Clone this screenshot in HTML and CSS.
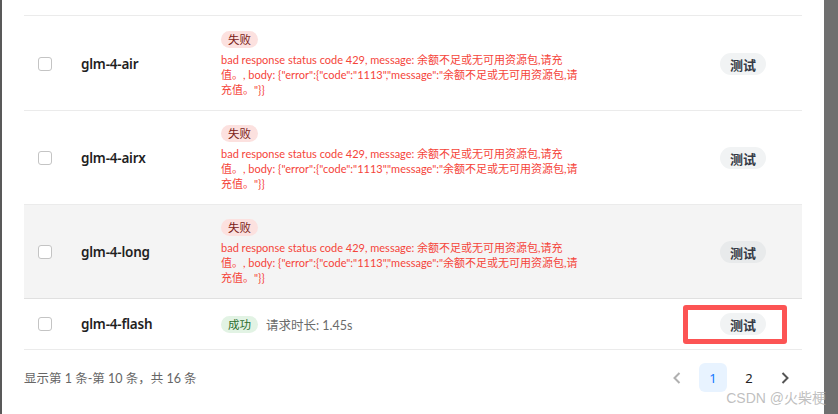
FILE: index.html
```html
<!DOCTYPE html>
<html lang="zh-CN">
<head>
<meta charset="utf-8">
<title>模型测试</title>
<link rel="stylesheet" href="styles.css">
</head>
<body>
<div class="frame">
  <div class="edge-left"></div>
  <main class="main">
    <div class="table">
      <div class="row-cut"></div>

      <div class="row row-first">
        <div class="cell-check"><span class="checkbox"></span></div>
        <div class="cell-name">glm-4-air</div>
        <div class="cell-status">
          <span class="tag tag-fail">失败</span>
          <div class="err">bad response status code 429, message: 余额不足或无可用资源包,请充<br>值。, body: {"error":{"code":"1113","message":"余额不足或无可用资源包,请<br>充值。"}}</div>
        </div>
        <div class="cell-action"><button class="btn-test">测试</button></div>
      </div>

      <div class="row">
        <div class="cell-check"><span class="checkbox"></span></div>
        <div class="cell-name">glm-4-airx</div>
        <div class="cell-status">
          <span class="tag tag-fail">失败</span>
          <div class="err">bad response status code 429, message: 余额不足或无可用资源包,请充<br>值。, body: {"error":{"code":"1113","message":"余额不足或无可用资源包,请<br>充值。"}}</div>
        </div>
        <div class="cell-action"><button class="btn-test">测试</button></div>
      </div>

      <div class="row row-hover">
        <div class="cell-check"><span class="checkbox"></span></div>
        <div class="cell-name">glm-4-long</div>
        <div class="cell-status">
          <span class="tag tag-fail">失败</span>
          <div class="err">bad response status code 429, message: 余额不足或无可用资源包,请充<br>值。, body: {"error":{"code":"1113","message":"余额不足或无可用资源包,请<br>充值。"}}</div>
        </div>
        <div class="cell-action"><button class="btn-test">测试</button></div>
      </div>

      <div class="row row-short">
        <div class="cell-check"><span class="checkbox"></span></div>
        <div class="cell-name">glm-4-flash</div>
        <div class="cell-status cell-status-inline">
          <span class="tag tag-ok">成功</span>
          <span class="duration">请求时长: 1.45s</span>
        </div>
        <div class="cell-action"><button class="btn-test">测试</button></div>
        <span class="highlight"></span>
      </div>
    </div>

    <div class="footer">
      <div class="total">显示第 1 条-第 10 条，共 16 条</div>
      <div class="pager">
        <span class="page-item page-arrow disabled">
          <svg width="10" height="12" viewBox="0 0 10 12"><path d="M7.5 1 L2.5 6 L7.5 11" fill="none" stroke="currentColor" stroke-width="2"/></svg>
        </span>
        <span class="page-item active">1</span>
        <span class="page-item">2</span>
        <span class="page-item page-arrow">
          <svg width="10" height="12" viewBox="0 0 10 12"><path d="M2.5 1 L7.5 6 L2.5 11" fill="none" stroke="currentColor" stroke-width="2"/></svg>
        </span>
      </div>
    </div>
    <div class="watermark">CSDN @火柴梗</div>
  </main>
  <div class="edge-right"></div>
</div>
</body>
</html>
```

FILE: styles.css
```css
* { box-sizing: border-box; }
html, body { margin: 0; padding: 0; background: #fff; }
body {
  font-family: "Noto Sans", "Noto Sans CJK SC", sans-serif;
  color: #1f1f1f;
}
.frame {
  display: flex;
  width: 838px;
  height: 414px;
  overflow: hidden;
}
.edge-left { width: 2px; background: #595959; flex: none; }
.edge-right { width: 14px; background: #6f6f6f; flex: none; position: relative; z-index: 0; }
.main {
  position: relative;
  flex: 1;
  padding-left: 22px;
  background: #fff;
}
.table { width: 778px; }
.row-cut { height: 16px; border-bottom: 1px solid #ebebeb; }
.row {
  position: relative;
  display: flex;
  align-items: center;
  padding: 14px 0 13px;
  border-bottom: 1px solid #ebebeb;
}
.row-first { padding-top: 15px; }
.row-hover { background: #f4f4f4; border-bottom-color: #e0e0e0; }
.row-short { padding: 14px 0 14px; }
.cell-check { width: 57px; padding-left: 14px; flex: none; display: flex; }
.checkbox {
  width: 14px; height: 14px;
  border: 1px solid #c4c4c4; border-radius: 3px;
  background: #fff;
}
.cell-name {
  width: 140px; flex: none;
  font-size: 13.5px; font-weight: 600; color: #1f1f1f;
  letter-spacing: -0.2px;
}
.cell-status { flex: 1; display: flex; flex-direction: column; align-items: flex-start; }
.cell-status-inline { flex-direction: row; align-items: center; gap: 8px; }
.tag {
  display: inline-block;
  height: 17px; line-height: 17px;
  padding: 0 7px;
  border-radius: 9px;
  font-size: 11.5px;
}
.tag-fail { background: #fce1df; color: #7a1a16; margin-bottom: 4px; }
.tag-ok { background: #e2f3e4; color: #2c6e2f; }
.err {
  font-family: "Lato", "Noto Sans CJK SC", sans-serif;
  font-size: 11px; line-height: 15px;
  color: #f5443a; white-space: nowrap;
}
.duration {
  font-family: "Lato", "Noto Sans CJK SC", sans-serif;
  font-size: 12.5px; color: #6b6b6b;
}
.cell-action { width: 118px; flex: none; display: flex; justify-content: center; }
.btn-test {
  height: 22px; width: 46px;
  border: none; border-radius: 11px;
  background: #f1f3f4;
  font-family: inherit; font-size: 13px; font-weight: 700; color: #353a45;
  padding: 0;
}
.row-hover .btn-test { background: #e8eaeb; }
.highlight {
  position: absolute;
  left: 659px; top: 6px;
  width: 104px; height: 39px;
  border: 5px solid #fc5454;
  border-radius: 3px;
}
.footer {
  display: flex;
  align-items: center;
  justify-content: space-between;
  width: 778px;
  padding-top: 13px;
}
.total {
  font-family: "Lato", "Noto Sans CJK SC", sans-serif;
  font-size: 12.5px; color: #666;
}
.pager { display: flex; gap: 8px; margin-right: 3px; }
.page-item {
  width: 28px; height: 29px;
  display: flex; align-items: center; justify-content: center;
  font-size: 13px; color: #222; border-radius: 6px;
}
.page-item.active { background: #e8f3ff; color: #1677ff; }
.page-arrow { color: #555; }
.page-arrow.disabled { color: #b0b0b0; }
.watermark {
  position: absolute;
  right: -2px; bottom: 7px;
  z-index: 2;
  font-size: 14px; color: rgba(175,175,175,0.8);
  white-space: nowrap;
  font-family: "Liberation Sans", "Noto Sans CJK SC", sans-serif;
}
```
